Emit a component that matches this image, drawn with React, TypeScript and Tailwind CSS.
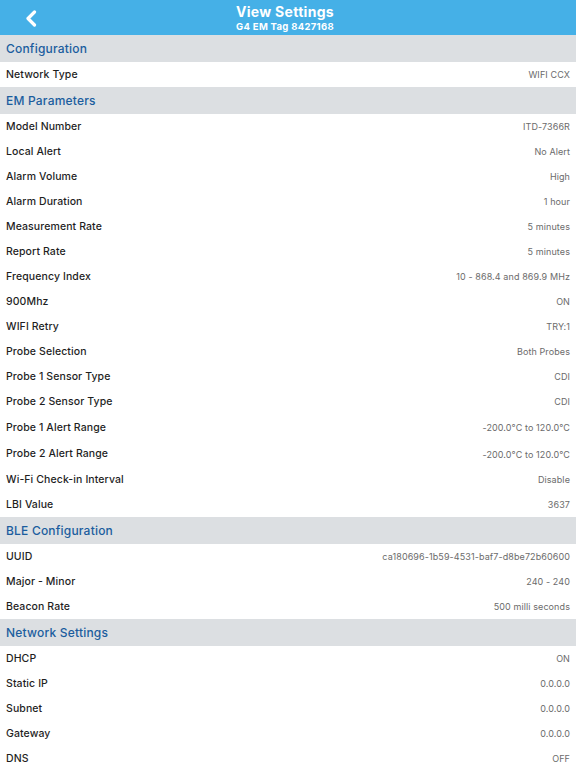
import React from 'react';

type Row = { label: string; value: string; tall?: boolean };
type Section = { title: string; rows: Row[] };

const sections: Section[] = [
  { title: 'Configuration', rows: [{ label: 'Network Type', value: 'WIFI CCX' }] },
  {
    title: 'EM Parameters',
    rows: [
      { label: 'Model Number', value: 'ITD-7366R' },
      { label: 'Local Alert', value: 'No Alert' },
      { label: 'Alarm Volume', value: 'High' },
      { label: 'Alarm Duration', value: '1 hour' },
      { label: 'Measurement Rate', value: '5 minutes' },
      { label: 'Report Rate', value: '5 minutes' },
      { label: 'Frequency Index', value: '10 - 868.4 and 869.9 MHz' },
      { label: '900Mhz', value: 'ON' },
      { label: 'WIFI Retry', value: 'TRY:1' },
      { label: 'Probe Selection', value: 'Both Probes' },
      { label: 'Probe 1 Sensor Type', value: 'CDI' },
      { label: 'Probe 2 Sensor Type', value: 'CDI' },
      { label: 'Probe 1 Alert Range', value: '-200.0°C to 120.0°C', tall: true },
      { label: 'Probe 2 Alert Range', value: '-200.0°C to 120.0°C', tall: true },
      { label: 'Wi-Fi Check-in Interval', value: 'Disable' },
      { label: 'LBI Value', value: '3637' },
    ],
  },
  {
    title: 'BLE Configuration',
    rows: [
      { label: 'UUID', value: 'ca180696-1b59-4531-baf7-d8be72b60600' },
      { label: 'Major - Minor', value: '240 - 240' },
      { label: 'Beacon Rate', value: '500 milli seconds' },
    ],
  },
  {
    title: 'Network Settings',
    rows: [
      { label: 'DHCP', value: 'ON' },
      { label: 'Static IP', value: '0.0.0.0' },
      { label: 'Subnet', value: '0.0.0.0' },
      { label: 'Gateway', value: '0.0.0.0' },
      { label: 'DNS', value: 'OFF' },
    ],
  },
];

const App: React.FC = () => {
  return (
    <div className="w-[576px] h-[768px] overflow-hidden bg-white" style={{ fontFamily: 'Inter, "Open Sans", sans-serif' }}>
      <header className="h-[35px] bg-[#45b0e7] flex items-center relative">
        <button className="absolute left-[23px] top-[9px] w-[16px] h-[18px] flex items-center justify-center">
          <svg width="12" height="17" viewBox="0 0 12 17" fill="none">
            <path d="M9.5 2 L3 8.5 L9.5 15" stroke="white" strokeWidth="3.2" strokeLinecap="round" strokeLinejoin="round" />
          </svg>
        </button>
        <div className="flex-1 flex flex-col items-center text-white leading-none pr-[6px] pt-[1px]">
          <div className="text-[14px] font-bold tracking-[0.3px]">View Settings</div>
          <div className="text-[9.5px] font-bold mt-[3px] tracking-[0.3px]">G4 EM Tag 8427168</div>
        </div>
      </header>

      {sections.map((s) => (
        <section key={s.title}>
          <div className="h-[27px] bg-[#dcdfe2] flex items-center px-[6px] pt-[1px]">
            <span className="text-[12px] font-medium text-[#1b5d9e] tracking-[0.2px]">{s.title}</span>
          </div>
          {s.rows.map((r) => (
            <div key={r.label} className={`${r.tall ? 'h-[26.5px]' : 'h-[25px]'} flex items-center justify-between px-[6px] pt-[1px]`}>
              <span className="text-[10.5px] font-medium text-[#1f1f1f] tracking-[0.1px]">{r.label}</span>
              <span className="text-[9px] text-[#6b6b6b] tracking-[0.1px]">{r.value}</span>
            </div>
          ))}
        </section>
      ))}
    </div>
  );
};

export default App;
